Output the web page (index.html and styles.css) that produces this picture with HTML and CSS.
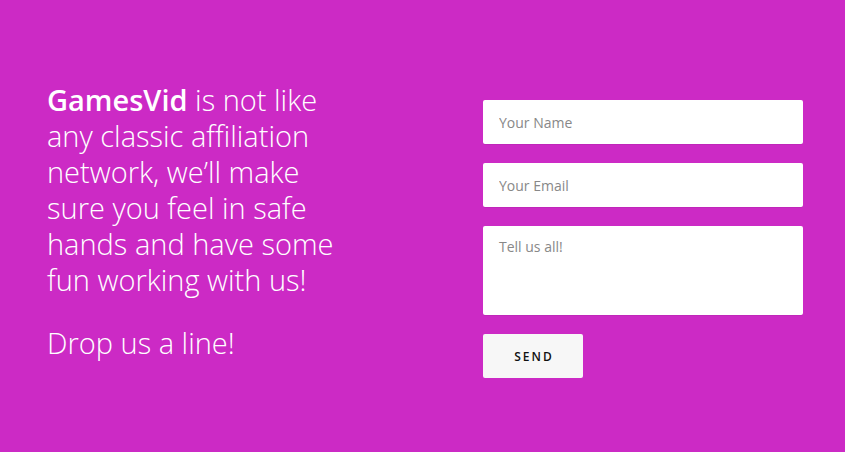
FILE: index.html
```html
<!DOCTYPE html>
<html>
<head>
<meta charset="utf-8">
<link rel="stylesheet" href="styles.css">
</head>
<body>
<div class="page">
  <div class="intro">
    <p class="lead"><strong>GamesVid</strong> is not like<br>any classic affiliation<br>network, we’ll make<br>sure you feel in safe<br>hands and have some<br>fun working with us!</p>
    <p class="lead drop">Drop us a line!</p>
  </div>
  <form class="form">
    <input class="field" type="text" placeholder="Your Name">
    <input class="field" type="email" placeholder="Your Email">
    <textarea class="field area" placeholder="Tell us all!"></textarea>
    <button class="send" type="button">SEND</button>
  </form>
</div>
</body>
</html>
```
FILE: styles.css
```css
html, body {
  margin: 0;
  padding: 0;
  height: 100%;
}
body {
  background: #cc2ac5;
  font-family: "Open Sans", "Noto Sans", sans-serif;
}
.page {
  display: flex;
  justify-content: space-between;
  align-items: flex-start;
  padding: 82px 42px 0 47px;
}
.intro {
  color: #fff;
}
.lead {
  margin: 0;
  font-size: 29px;
  line-height: 36px;
  font-weight: 300;
}
.lead strong {
  font-weight: 600;
}
.drop {
  margin-top: 27px;
}
.form {
  width: 320px;
  margin-top: 18px;
  display: flex;
  flex-direction: column;
  align-items: flex-start;
  gap: 19px;
}
.field {
  box-sizing: border-box;
  width: 320px;
  height: 44px;
  border: none;
  border-radius: 2px;
  background: #fff;
  padding: 0 16px;
  font-family: "Open Sans", "Noto Sans", sans-serif;
  font-size: 14px;
  color: #333;
  outline: none;
  box-shadow: 0 1px 0 rgba(0,0,0,0.06);
}
.field::placeholder {
  color: #888;
  opacity: 1;
}
.area {
  height: 89px;
  padding: 11px 16px;
  resize: none;
  display: block;
}
.send {
  width: 100px;
  height: 44px;
  border: none;
  border-radius: 2px;
  background: #f7f7f7;
  color: #111;
  font-family: "Open Sans", "Noto Sans", sans-serif;
  font-size: 12px;
  font-weight: 600;
  letter-spacing: 2px;
  padding: 0 0 0 2px;
  cursor: pointer;
}
```
